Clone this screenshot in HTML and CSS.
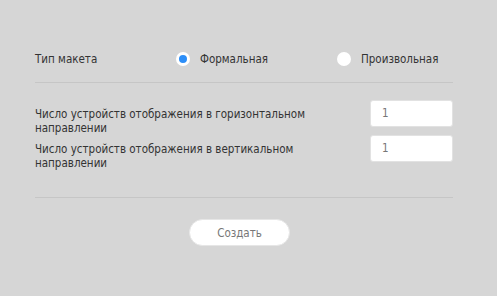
FILE: index.html
```html
<!DOCTYPE html>
<html lang="ru">
<head>
  <meta charset="UTF-8">
  <title>Тип макета</title>
  <link rel="stylesheet" href="styles.css">
</head>
<body>
<div class="panel">
  <div class="layout-row">
    <span class="row-label">Тип макета</span>
    <label class="radio radio-first">
      <span class="radio-dot checked"></span>
      <span>Формальная</span>
    </label>
    <label class="radio">
      <span class="radio-dot"></span>
      <span>Произвольная</span>
    </label>
  </div>

  <div class="fields">
    <div class="field">
      <span class="field-label">Число устройств отображения в горизонтальном направлении</span>
      <div class="field-input">1</div>
    </div>
    <div class="field">
      <span class="field-label">Число устройств отображения в вертикальном направлении</span>
      <div class="field-input">1</div>
    </div>
  </div>

  <div class="actions">
    <button class="btn-create">Создать</button>
  </div>
</div>
</body>
</html>
```

FILE: styles.css
```css
body {
  margin: 0;
  background: #d6d6d6;
  font-family: "DejaVu Sans Condensed", "DejaVu Sans", sans-serif;
  font-size: 11.5px;
  color: #333;
}
.panel {
  width: 418px;
  margin-left: 35px;
  padding-top: 48px;
}
.layout-row {
  display: flex;
  align-items: center;
  height: 22px;
  padding-bottom: 12px;
  border-bottom: 1px solid #c6c6c6;
}
.row-label {
  width: 141px;
}
.radio {
  display: flex;
  align-items: center;
  gap: 10px;
}
.radio-first {
  width: 161px;
}
.radio-dot {
  width: 14px;
  height: 14px;
  border-radius: 50%;
  background: #fff;
  box-sizing: border-box;
}
.radio-dot.checked {
  border: 3px solid #fff;
  background: #2c8ef8;
}
.fields {
  display: flex;
  flex-direction: column;
  gap: 7px;
  padding-top: 24px;
  padding-bottom: 27px;
  border-bottom: 1px solid #c6c6c6;
}
.field {
  display: flex;
  justify-content: space-between;
  align-items: flex-start;
}
.field-label {
  width: 290px;
  line-height: 14px;
}
.field-input {
  width: 83px;
  height: 27px;
  margin-top: -7px;
  box-sizing: border-box;
  background: #fff;
  border: 1px solid #e2e2e2;
  border-radius: 3px;
  padding-left: 11px;
  line-height: 25px;
  color: #777;
}
.actions {
  display: flex;
  padding-top: 21px;
  padding-left: 154px;
}
.btn-create {
  width: 101px;
  height: 27px;
  border: 1px solid #e6e6e6;
  border-radius: 14px;
  background: #fff;
  color: #777;
  font-family: inherit;
  font-size: 11.5px;
}
```
